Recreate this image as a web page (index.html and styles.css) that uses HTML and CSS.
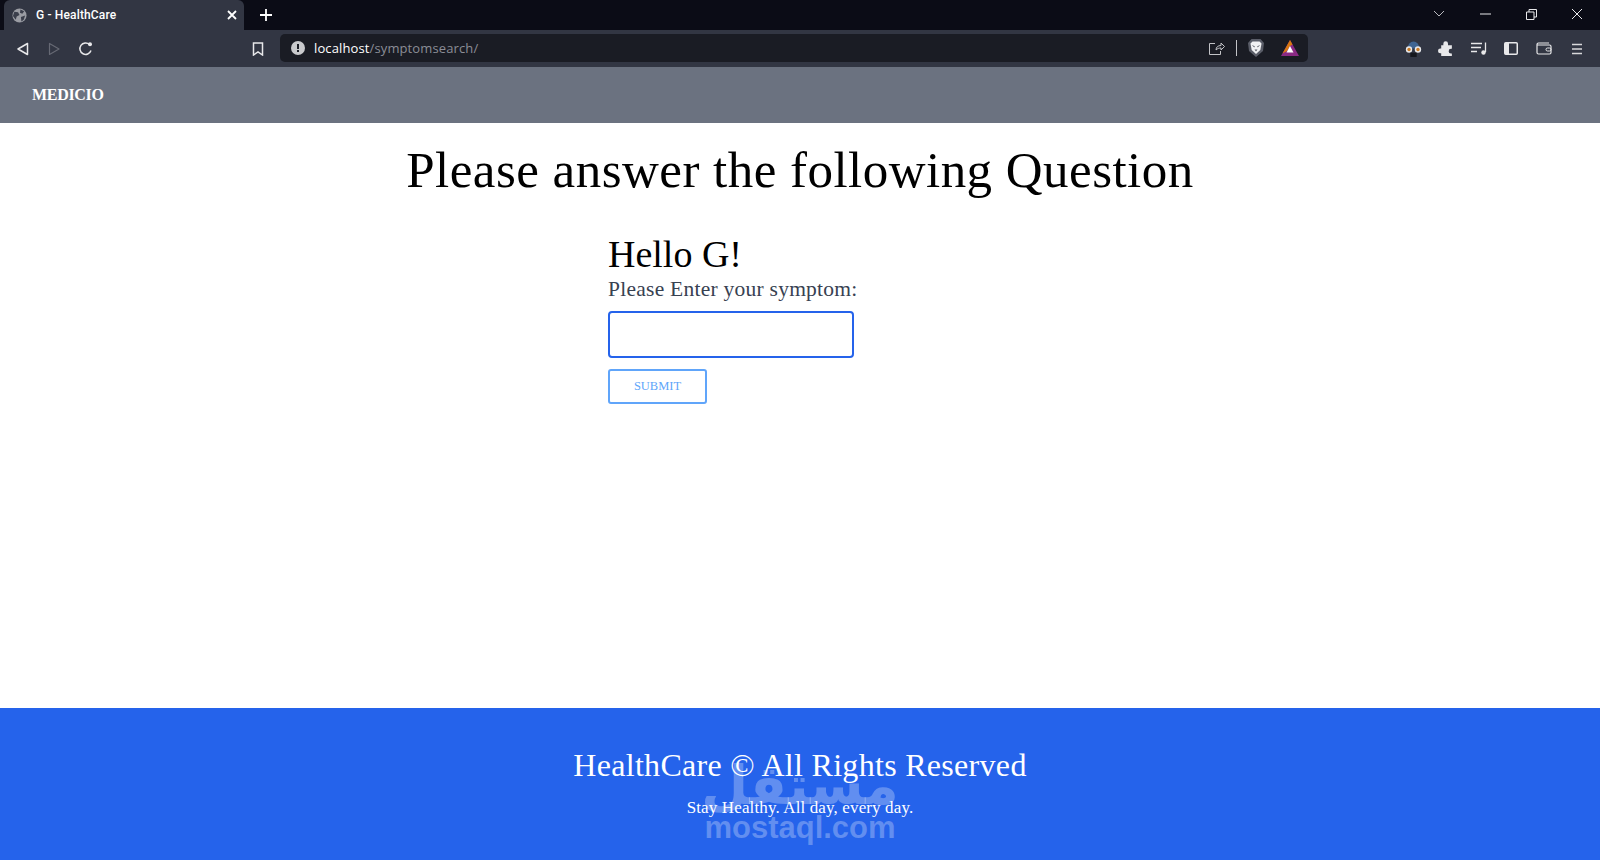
FILE: index.html
```html
<!DOCTYPE html>
<html lang="en">
<head>
<meta charset="utf-8">
<title>G - HealthCare</title>
<link rel="stylesheet" href="styles.css">
</head>
<body>
<div class="chrome">
  <div class="tabstrip">
    <div class="tab">
      <svg class="favicon" width="15" height="15" viewBox="0 0 16 16"><circle cx="8" cy="8" r="7.500" fill="#9a9ca3"/><path d="M2.500 4l4 .5 1.500 3-3 1.500-1 3.500-3-4zM9 1.500l4 2-2 2.500-2.500-1zM9.500 9.500l4.500-1.500-1.500 4.500-2.500 2z" fill="#3a3e4b"/></svg>
      <span class="tab-title">G - HealthCare</span>
      <svg class="tab-close" width="10" height="10" viewBox="0 0 10 10"><path d="M1 1l8 8M9 1l-8 8" stroke="#fff" stroke-width="1.800"/></svg>
    </div>
    <svg class="newtab" width="14" height="14" viewBox="0 0 14 14"><path d="M7 1v12M1 7h12" stroke="#fff" stroke-width="1.800"/></svg>
    <div class="winbtns">
      <span class="winbtn"><svg width="12" height="8" viewBox="0 0 12 8"><path d="M1 1l5 5 5-5" fill="none" stroke="#b8b9be" stroke-width="1"/></svg></span>
      <span class="winbtn"><svg width="11" height="2" viewBox="0 0 11 2"><path d="M0 1h11" stroke="#e8e8ea" stroke-width="1"/></svg></span>
      <span class="winbtn"><svg width="11" height="11" viewBox="0 0 11 11"><path d="M.5 3h7.500v7.500H.5zM3 3V.5h7.500V8H8" fill="none" stroke="#e8e8ea"/></svg></span>
      <span class="winbtn"><svg width="12" height="12" viewBox="0 0 12 12"><path d="M1 1l10 10M11 1L1 11" stroke="#e8e8ea" stroke-width="1"/></svg></span>
    </div>
  </div>
  <div class="toolbar">
    <div class="navbtns">
      <svg width="14" height="14" viewBox="0 0 14 14"><path d="M11.500 1.500v11L2 7z" fill="none" stroke="#e8e8ea" stroke-width="1.500" stroke-linejoin="round"/></svg>
      <svg width="14" height="14" viewBox="0 0 14 14"><path d="M2.500 1.500v11L12 7z" fill="none" stroke="#666974" stroke-width="1.200" stroke-linejoin="round"/></svg>
      <svg width="15" height="15" viewBox="0 0 15 15"><path d="M13 9.500a5.700 5.700 0 1 1-1.500-6" fill="none" stroke="#e8e8ea" stroke-width="1.500"/><circle cx="12" cy="3.300" r="2" fill="#e8e8ea"/></svg>
    </div>
    <svg class="bookmark" width="12" height="14" viewBox="0 0 12 14"><path d="M1.500 1h9v12L6 10l-4.500 3z" fill="none" stroke="#e8e8ea" stroke-width="1.500"/></svg>
    <div class="urlbar">
      <svg width="14" height="14" viewBox="0 0 14 14"><circle cx="7" cy="7" r="7" fill="#c9cacd"/><rect x="6" y="3" width="2" height="5" fill="#1c1f27"/><rect x="6" y="9" width="2" height="2" fill="#1c1f27"/></svg>
      <span class="url"><span class="host">localhost</span>/symptomsearch/</span>
      <svg class="share" width="16" height="14" viewBox="0 0 16 14"><path d="M6 2.500H.500v11h11V10M7 9c0-3 2-4.500 5-4.500V2l3.500 3.500L12 9V7C10 7 8.500 7.500 7 9z" fill="none" stroke="#c2c3c7"/></svg>
      <span class="urlsep"></span>
      <svg class="brave" width="16" height="18" viewBox="0 0 16 18"><path d="M3.500 0h9L16 4l-1 8-7 6-7-6-1-8z" fill="#5a5d68"/><path d="M4.500 2.500h7l2 2-1.200 6.500L8 15l-4.300-4-1.200-6.500z" fill="#f1f1f3"/><path d="M3.800 6l3 1.200-.5 1.300zM12.200 6l-3 1.200.5 1.300z" fill="#5a5d68"/><path d="M6.500 10.500h3L8 12.500z" fill="#5a5d68"/></svg>
      <svg class="bat" width="18" height="16" viewBox="0 0 18 16"><path d="M9 0l9 16H0z" fill="#8a2a84"/><path d="M9 0L1.500 13.500 6 11l3-5 2.500-1.500z" fill="#d9780f"/><path d="M9 6l3.500 6.500h-7z" fill="#fff"/></svg>
    </div>
    <div class="exts">
      <span class="ext"><svg width="17" height="16" viewBox="0 0 16 15"><path d="M2.500 7a5.500 6.500 0 0 1 11 0z" fill="#3f6593"/><circle cx="3.800" cy="8" r="3" fill="#e8e8ea"/><circle cx="12.200" cy="8" r="3" fill="#e8e8ea"/><circle cx="3.800" cy="8" r="1.600" fill="#c97a25"/><circle cx="12.200" cy="8" r="1.600" fill="#c97a25"/><rect x="5" y="11" width="6" height="4" fill="#15171d"/></svg></span>
      <span class="ext"><svg width="16" height="16" viewBox="0 0 15 15"><path d="M5 2.500a2.200 2.200 0 0 1 4.400 0V4H13v3.300h-.8a2.200 2.200 0 0 0 0 4.400h.8V14H3v-2.500H2.200a2.200 2.200 0 0 1 0-4.400H3V4h2z" fill="#e8e8ea"/></svg></span>
      <span class="ext"><svg width="16" height="13" viewBox="0 0 16 13"><path d="M0 1.500h11M0 5.500h10M0 9.500h6M14.500 0.500V10" stroke="#e8e8ea" stroke-width="1.300" fill="none"/><circle cx="12.500" cy="10.500" r="2.200" fill="#e8e8ea"/></svg></span>
      <span class="ext"><svg width="14" height="13" viewBox="0 0 14 13"><rect x=".75" y=".75" width="12.500" height="11.500" rx="1" fill="none" stroke="#e8e8ea" stroke-width="1.500"/><rect x="1" y="1" width="4" height="11" fill="#e8e8ea"/></svg></span>
      <span class="ext"><svg width="16" height="13" viewBox="0 0 16 13"><path d="M13 1H2.500A1.500 1.500 0 0 0 1 2.500v8A1.500 1.500 0 0 0 2.500 12h11a1.500 1.500 0 0 0 1.500-1.500v-6A1.500 1.500 0 0 0 13.500 3H1" fill="none" stroke="#e8e8ea" stroke-width="1.200"/><rect x="10" y="6" width="5" height="3" rx="1.500" fill="none" stroke="#e8e8ea"/></svg></span>
      <span class="ext"><svg width="10" height="12" viewBox="0 0 10 12"><path d="M0 1.500h10M0 6h10M0 10.500h10" stroke="#d8d8da" stroke-width="1.500"/></svg></span>
    </div>
  </div>
</div>
<header class="navbar"><a class="brand">MEDICIO</a></header>
<main class="content">
  <h1 class="title">Please answer the following Question</h1>
  <form class="symptom-form">
    <h2 class="hello">Hello G!</h2>
    <label class="prompt" for="symptom">Please Enter your symptom:</label>
    <input class="field" id="symptom" type="text">
    <button class="submit" type="button">SUBMIT</button>
  </form>
</main>
<footer class="footer">
  <div class="watermark"><span class="wm-ar">مستقل</span><span class="wm-en">mostaql.com</span></div>
  <p class="copyright">HealthCare © All Rights Reserved</p>
  <p class="tagline">Stay Healthy. All day, every day.</p>
</footer>
</body>
</html>
```
FILE: styles.css
```css
* { box-sizing: border-box; }
html, body { margin: 0; height: 100%; }
body {
  display: flex;
  flex-direction: column;
  height: 860px;
  overflow: hidden;
  background: #fff;
  font-family: "Liberation Serif", serif;
}
.chrome { flex: none; height: 67px; background: #323643; }
.tabstrip {
  height: 30px;
  background: #0b0c16;
  display: flex;
  align-items: center;
  padding-left: 4px;
}
.tab {
  width: 240px;
  height: 30px;
  background: #323643;
  border-radius: 6px 6px 0 0;
  display: flex;
  align-items: center;
  padding: 0 7px 0 8px;
  color: #fff;
  font: 500 12px Roboto, sans-serif;
}
.favicon { margin-right: 9px; }
.tab-title { flex: 1; font-weight: 500; letter-spacing: 0.15px; }
.newtab { margin-left: 15px; }
.winbtns { margin-left: auto; display: flex; padding-bottom: 2px; }
.winbtn { width: 46px; display: flex; justify-content: center; align-items: center; }
.toolbar { height: 37px; display: flex; align-items: center; }
.navbtns { display: flex; align-items: center; gap: 17px; padding-left: 16px; width: 252px; }
.bookmark { margin-right: 16px; }
.urlbar {
  width: 1028px;
  height: 28px;
  margin-top: -1px;
  background: #1a1c24;
  border-radius: 5px;
  display: flex;
  align-items: center;
  padding: 0 9px 0 11px;
}
.url { flex: 1; margin-left: 9px; color: #8b8d96; font: 13px "Open Sans", sans-serif; letter-spacing: 0.12px; }
.host { color: #fff; }
.urlsep { width: 1px; height: 16px; background: #c2c3c7; margin: 0 11px; }
.bat { margin-left: 17px; }
.exts { display: grid; grid-template-columns: repeat(6, 32.7px); align-items: center; justify-items: center; margin-left: 89px; }
.ext { display: flex; }
.navbar {
  flex: none;
  height: 56px;
  background: #6b7280;
  display: flex;
  align-items: center;
  padding: 0 32px;
}
.brand { color: #fff; font-size: 16px; font-weight: 700; letter-spacing: -0.3px; }
.content { flex: 1; display: flex; flex-direction: column; }
.title {
  margin: 15px 0 0;
  text-align: center;
  font-size: 51px;
  line-height: 64px;
  font-weight: 400;
  letter-spacing: 0.47px;
  color: #000;
}
.symptom-form { display: flex; flex-direction: column; align-items: flex-start; margin: 32px 0 0 608px; }
.hello { margin: 0; font-size: 38px; line-height: 40px; font-weight: 400; color: #000; }
.prompt { margin-top: 1px; font-size: 21.5px; line-height: 28px; letter-spacing: 0.25px; color: #374151; }
.field {
  width: 246px;
  height: 47px;
  margin-top: 8px;
  border: 2px solid #2563eb;
  border-radius: 4px;
  background: #fff;
}
.submit {
  width: 99px;
  height: 35px;
  margin-top: 11px;
  border: 2px solid #60a5fa;
  border-radius: 3px;
  background: #fff;
  color: #60a5fa;
  font-family: inherit;
  font-size: 12.5px;
}
.footer {
  flex: none;
  position: relative;
  height: 152px;
  background: #2563eb;
  color: #fff;
  text-align: center;
  padding-top: 39px;
}
.copyright { position: relative; margin: 0; font-size: 32px; line-height: 36px; letter-spacing: 0.3px; }
.tagline { position: relative; margin: 13px 0 0; font-size: 17px; line-height: 24px; letter-spacing: 0.13px; }
.watermark {
  position: absolute;
  left: 703px;
  top: 47px;
  width: 194px;
  display: flex;
  flex-direction: column;
  align-items: center;
  color: rgba(255,255,255,.28);
  font-family: "DejaVu Sans", sans-serif;
  font-weight: 700;
}
.wm-ar { font-size: 54px; line-height: 62px; }
.wm-en { margin-top: -4px; font-family: "Liberation Sans", sans-serif; font-size: 31px; line-height: 30px; }
```
